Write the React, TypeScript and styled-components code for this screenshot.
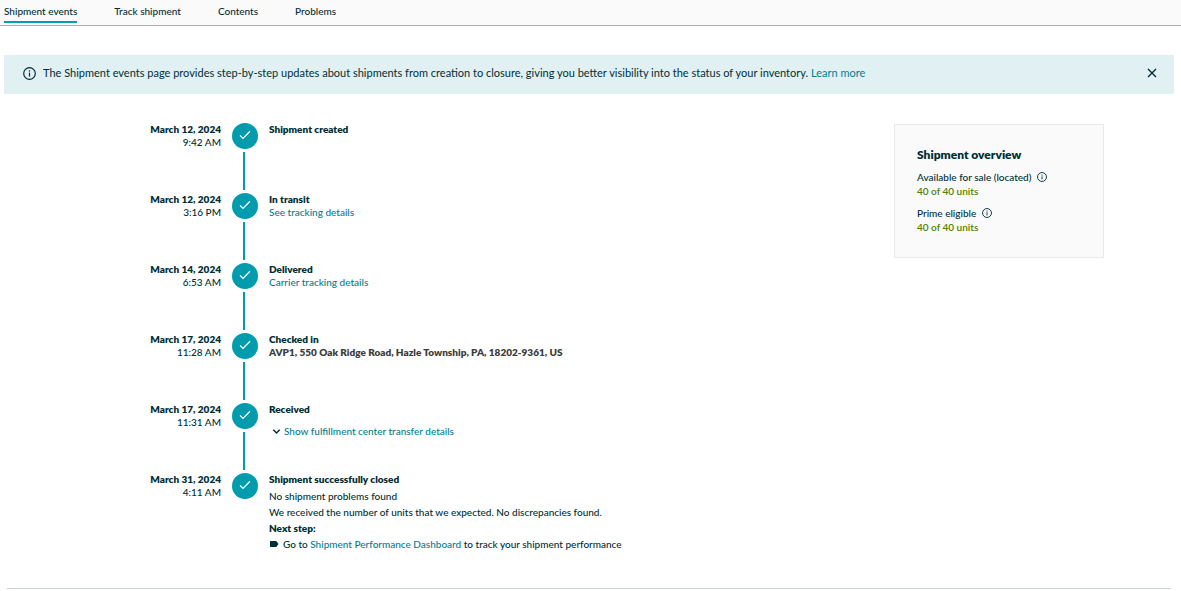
import React from "react";
import styled, { createGlobalStyle } from "styled-components";

const GlobalStyle = createGlobalStyle`
  * { box-sizing: border-box; }
  body {
    margin: 0;
    background: #fff;
    color: #002f36;
    font-family: Lato, "Noto Sans", sans-serif;
    font-size: 10px;
    font-weight: 500;
    line-height: 14px;
  }
  p, h2, h3, h4, ol, ul, dl, dd { margin: 0; padding: 0; }
  ol, ul { list-style: none; }
  strong { font-weight: 800; }
  svg { display: block; flex: none; }
`;

const TabBar = styled.nav`
  display: flex;
  gap: 37px;
  height: 26px;
  padding: 4px 4px 0;
  background: #fafafa;
  border-bottom: 1px solid #aaaeae;
`;

const Tab = styled.a<{ $active?: boolean }>`
  height: 19px;
  color: #002f36;
  text-decoration: none;
  border-bottom: 2px solid ${(p) => (p.$active ? "#009eaf" : "transparent")};
`;

const Banner = styled.section`
  display: flex;
  align-items: center;
  gap: 7px;
  min-height: 39px;
  margin: 29px 7px 0 4px;
  padding: 0 16px 3px 19px;
  background: #e0f0f3;
`;

const BannerText = styled.p`
  flex: 1;
  font-size: 11px;
  font-weight: 400;
`;

const Link = styled.a`
  color: #007e90;
  text-decoration: none;
`;

const CloseButton = styled.button`
  padding: 0;
  border: 0;
  background: none;
  color: #002f36;
  cursor: pointer;
`;

const Main = styled.main`
  display: flex;
  align-items: flex-start;
  padding: 29px 77px 0;
`;

const Timeline = styled.ol`
  flex: 1;
`;

const EventRow = styled.li`
  display: grid;
  grid-template-columns: 144px 26px 1fr;
  column-gap: 11px;
  min-height: 70px;
`;

const When = styled.div`
  display: flex;
  flex-direction: column;
  line-height: 13px;
  text-align: right;
`;

const Rail = styled.div`
  display: flex;
  flex-direction: column;
  gap: 3px;
`;

const Dot = styled.span`
  display: flex;
  justify-content: center;
  height: 26px;
  padding-top: 7px;
  border-radius: 50%;
  background: #009bad;
`;

const Connector = styled.span`
  flex: 1;
  width: 2px;
  margin: 0 0 3px 11px;
  background: #009bad;
`;

const Details = styled.div`
  display: flex;
  flex-direction: column;
  align-items: flex-start;
  line-height: 13px;
`;

const EventTitle = styled.h3`
  font-size: 10px;
  font-weight: 800;
`;

const Address = styled.p`
  color: #3d3d3d;
  font-weight: 800;
`;

const Expander = styled.button`
  display: flex;
  align-items: center;
  gap: 3px;
  margin: 9px 0 0 3px;
  padding: 0;
  border: 0;
  background: none;
  color: #007e90;
  font: inherit;
  cursor: pointer;
`;

const Outcome = styled.div`
  display: flex;
  flex-direction: column;
  gap: 2px;
  margin-top: 3px;
  line-height: 14px;
`;

const NextHeading = styled.h4`
  font-size: 10px;
  font-weight: 800;
`;

const NextStep = styled.p`
  display: flex;
  align-items: center;
  gap: 4px;
`;

const Overview = styled.aside`
  width: 210px;
  min-height: 134px;
  margin-top: 1px;
  padding: 22px;
  border: 1px solid #e7e9ec;
  background: #fafafa;
`;

const OverviewTitle = styled.h2`
  margin-bottom: 7px;
  font-size: 12px;
  font-weight: 800;
  line-height: 16px;
`;

const Stats = styled.dl`
  display: flex;
  flex-direction: column;
  gap: 8px;
`;

const StatName = styled.dt`
  display: flex;
  align-items: center;
  gap: 6px;
`;

const StatValue = styled.dd`
  color: #507f00;
  font-weight: 600;
`;

const Divider = styled.hr`
  margin: 37px 10px 0 7px;
  border: 0;
  border-top: 1px solid #c9d2d2;
`;

const InfoIcon = ({ size }: { size: number }) => (
  <svg width={size} height={size} viewBox="0 0 13 13" fill="none" stroke="#002f36" aria-hidden="true">
    <circle cx="6.5" cy="6.5" r="5.8" strokeWidth="1.2" />
    <path d="M6.5 5.6v4" strokeWidth="1.2" />
    <path d="M6.5 3.3v1.3" strokeWidth="1.3" />
  </svg>
);

const CheckIcon = () => (
  <svg width="12" height="10" viewBox="0 0 12 10" fill="none" stroke="#fff" strokeWidth="1.3" aria-hidden="true">
    <path d="M1 5.4l3 3L11 1.3" />
  </svg>
);

const CloseIcon = () => (
  <svg width="12" height="12" viewBox="0 0 12 12" fill="none" stroke="currentColor" strokeWidth="1.4" aria-hidden="true">
    <path d="M2 2l8 8M10 2l-8 8" />
  </svg>
);

const ChevronIcon = () => (
  <svg width="9" height="8" viewBox="0 0 9 8" fill="none" stroke="#002f36" strokeWidth="1.5" aria-hidden="true">
    <path d="M1.3 1.8l3.2 3.2 3.2-3.2" />
  </svg>
);

const TagIcon = () => (
  <svg width="10" height="8" viewBox="0 0 10 8" fill="#002f36" aria-hidden="true">
    <path d="M1.500 1h5.200q.6 0 1 .5L9.500 4 7.700 6.500q-.4.5-1 .5H1.500q-.5 0-.5-.5v-5q0-.5.5-.5z" />
  </svg>
);

interface ShipmentEvent {
  date: string;
  time: string;
  title: string;
  body?: React.ReactNode;
}

const events: ShipmentEvent[] = [
  { date: "March 12, 2024", time: "9:42 AM", title: "Shipment created" },
  {
    date: "March 12, 2024",
    time: "3:16 PM",
    title: "In transit",
    body: <Link href="#tracking">See tracking details</Link>,
  },
  {
    date: "March 14, 2024",
    time: "6:53 AM",
    title: "Delivered",
    body: <Link href="#carrier">Carrier tracking details</Link>,
  },
  {
    date: "March 17, 2024",
    time: "11:28 AM",
    title: "Checked in",
    body: <Address>AVP1, 550 Oak Ridge Road, Hazle Township, PA, 18202-9361, US</Address>,
  },
  {
    date: "March 17, 2024",
    time: "11:31 AM",
    title: "Received",
    body: (
      <Expander type="button" aria-expanded={false}>
        <ChevronIcon />
        Show fulfillment center transfer details
      </Expander>
    ),
  },
  {
    date: "March 31, 2024",
    time: "4:11 AM",
    title: "Shipment successfully closed",
    body: (
      <Outcome>
        <p>No shipment problems found</p>
        <p>We received the number of units that we expected. No discrepancies found.</p>
        <NextHeading>Next step:</NextHeading>
        <NextStep>
          <TagIcon />
          <span>
            Go to <Link href="#dashboard">Shipment Performance Dashboard</Link> to track your shipment performance
          </span>
        </NextStep>
      </Outcome>
    ),
  },
];

const stats = [
  { name: "Available for sale (located)", value: "40 of 40 units" },
  { name: "Prime eligible", value: "40 of 40 units" },
];

export default function App() {
  return (
    <>
      <GlobalStyle />
      <TabBar aria-label="Shipment sections">
        <Tab href="#events" $active aria-current="page">Shipment events</Tab>
        <Tab href="#track">Track shipment</Tab>
        <Tab href="#contents">Contents</Tab>
        <Tab href="#problems">Problems</Tab>
      </TabBar>
      <Banner>
        <InfoIcon size={13} />
        <BannerText>
          The Shipment events page provides step-by-step updates about shipments from creation to closure, giving you
          better visibility into the status of your inventory. <Link href="#learn">Learn more</Link>
        </BannerText>
        <CloseButton type="button" aria-label="Close">
          <CloseIcon />
        </CloseButton>
      </Banner>
      <Main>
        <Timeline>
          {events.map((event, index) => (
            <EventRow key={index}>
              <When>
                <strong>{event.date}</strong>
                <span>{event.time}</span>
              </When>
              <Rail>
                <Dot>
                  <CheckIcon />
                </Dot>
                {index < events.length - 1 && <Connector />}
              </Rail>
              <Details>
                <EventTitle>{event.title}</EventTitle>
                {event.body}
              </Details>
            </EventRow>
          ))}
        </Timeline>
        <Overview>
          <OverviewTitle>Shipment overview</OverviewTitle>
          <Stats>
            {stats.map((stat) => (
              <div key={stat.name}>
                <StatName>
                  {stat.name}
                  <InfoIcon size={10} />
                </StatName>
                <StatValue>{stat.value}</StatValue>
              </div>
            ))}
          </Stats>
        </Overview>
      </Main>
      <Divider />
    </>
  );
}
